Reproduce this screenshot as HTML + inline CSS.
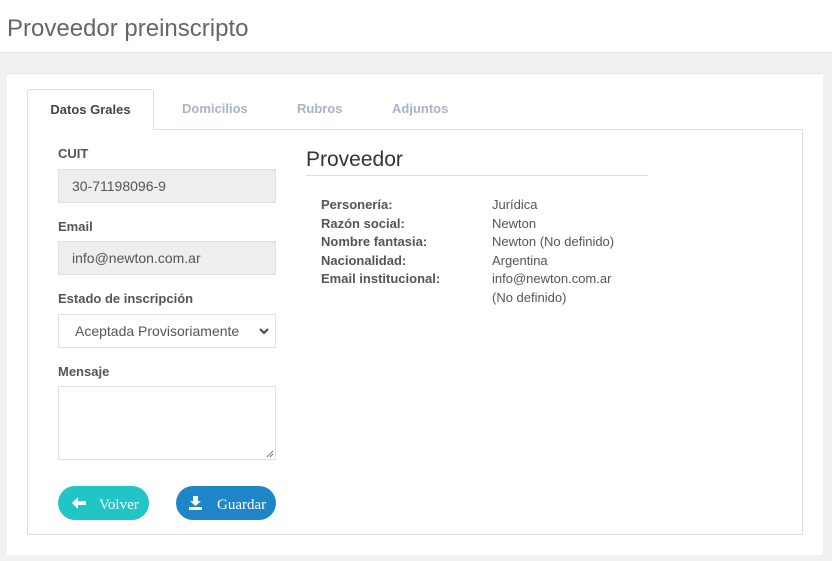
<!DOCTYPE html>
<html><head><meta charset="utf-8"><style>
*{box-sizing:border-box;margin:0;padding:0}
body{width:832px;height:561px;background:#f1f1f1;font-family:"Liberation Sans",sans-serif;position:relative;overflow:hidden;color:#555}
.hdr{position:absolute;left:0;top:0;width:832px;height:53px;background:#fff;border-bottom:1px solid #e3e3e3}
.hdr h1{position:absolute;left:7px;top:15px;font-size:24px;font-weight:normal;color:#666}
.card{position:absolute;left:7px;top:73px;width:816px;height:482px;background:#fff;border-top:1px solid #e6e6e6}
.box{position:absolute;left:27px;top:129px;width:776px;height:406px;border:1px solid #ddd}
.tab{position:absolute;top:89px;height:41px;font-size:13px;font-weight:bold;color:#aab3c3;line-height:40px}
.tab.a{left:27px;width:127px;background:#fff;border:1px solid #ddd;border-bottom:none;border-radius:3px 3px 0 0;color:#444;text-align:center}
.lbl{position:absolute;left:58px;font-size:13px;font-weight:bold;color:#555}
.inp{position:absolute;left:58px;width:218px;height:34px;border:1px solid #e0e0e0;font-size:14px;color:#555;padding-left:13px;line-height:32px}
.g{background:#eee}
.btn{position:absolute;top:486px;height:34px;border-radius:17px;color:#fff;font-family:"Liberation Serif",serif;font-size:15px;line-height:39px}
.dl{position:absolute;font-size:13px;line-height:18.5px}
.dl.k{left:321px;top:196px;font-weight:bold;color:#555}
.dl.v{left:492px;top:196px;color:#555}
</style></head><body>
<div class="hdr"><h1>Proveedor preinscripto</h1></div>
<div class="card"></div>
<div class="box"></div>
<div class="tab a">Datos Grales</div>
<div class="tab" style="left:182px">Domicilios</div>
<div class="tab" style="left:297px">Rubros</div>
<div class="tab" style="left:392px">Adjuntos</div>
<div class="lbl" style="top:146px">CUIT</div>
<div class="inp g" style="top:169px">30-71198096-9</div>
<div class="lbl" style="top:219px">Email</div>
<div class="inp g" style="top:241px">info@newton.com.ar</div>
<div class="lbl" style="top:291px">Estado de inscripción</div>
<div class="inp" style="top:314px;padding-left:16px">Aceptada Provisoriamente<svg style="position:absolute;right:6px;top:12px" width="10" height="8" viewBox="0 0 10 8"><path d="M1 2l4 4 4-4" fill="none" stroke="#444" stroke-width="2"/></svg></div>
<div class="lbl" style="top:364px">Mensaje</div>
<div class="inp" style="top:386px;height:74px"><svg style="position:absolute;right:1px;bottom:1px" width="8" height="8"><path d="M7 1L1 7M7 4L4 7" stroke="#777" stroke-width="1"/></svg></div>
<div class="btn" style="left:58px;width:91px;background:#22c5c5"><svg style="position:absolute;left:14px;top:11px" width="14" height="12" viewBox="0 0 14 12"><path d="M0 6L6 0V4H14V8H6V12Z" fill="#fff"/></svg><span style="position:absolute;left:41px">Volver</span></div>
<div class="btn" style="left:176px;width:100px;background:#1e86c8"><svg style="position:absolute;left:13px;top:10px" width="13" height="14" viewBox="0 0 13 14"><path d="M4 0H9V5H12L6.5 10L1 5H4Z M0 11H13V14H0Z" fill="#fff"/></svg><span style="position:absolute;left:41px">Guardar</span></div>
<div style="position:absolute;left:306px;top:148px;font-size:21px;color:#333">Proveedor</div>
<div style="position:absolute;left:306px;top:175px;width:342px;border-top:1px solid #ddd"></div>
<div class="dl k">Personería:<br>Razón social:<br>Nombre fantasia:<br>Nacionalidad:<br>Email institucional:</div>
<div class="dl v">Jurídica<br>Newton<br>Newton (No definido)<br>Argentina<br>info@newton.com.ar<br>(No definido)</div>
</body></html>
